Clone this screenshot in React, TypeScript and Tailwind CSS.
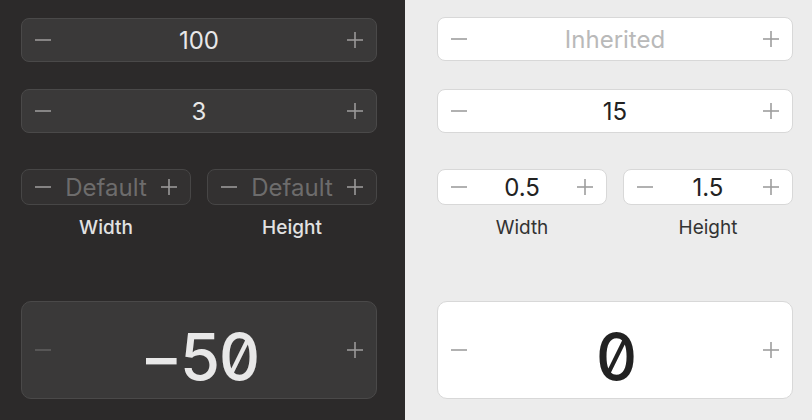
import type { ReactNode } from "react";

type Theme = "dark" | "light";

const MinusIcon = ({ className }: { className: string }) => (
  <svg width="16" height="16" viewBox="0 0 16 16" className={className}>
    <line x1="0" y1="8" x2="16" y2="8" stroke="currentColor" strokeWidth="1.6" />
  </svg>
);

const PlusIcon = ({ className }: { className: string }) => (
  <svg width="16" height="16" viewBox="0 0 16 16" className={className}>
    <line x1="0" y1="8" x2="16" y2="8" stroke="currentColor" strokeWidth="1.6" />
    <line x1="8" y1="0" x2="8" y2="16" stroke="currentColor" strokeWidth="1.6" />
  </svg>
);

function Stepper({
  theme,
  children,
  size = "md",
  muted = false,
  minusDisabled = false,
}: {
  theme: Theme;
  children: ReactNode;
  size?: "sm" | "md" | "lg";
  muted?: boolean;
  minusDisabled?: boolean;
}) {
  const dark = theme === "dark";
  const box = dark
    ? size === "sm"
      ? "bg-[#333131] border-[#474646]"
      : "bg-[#3a3939] border-[#4a4949]"
    : "bg-white border-[#d8d8d8]";
  const height =
    size === "lg" ? "h-[98px] rounded-[10px]" : size === "sm" ? "h-[36px] rounded-[8px]" : "h-[44px] rounded-[8px]";
  const iconColor = dark ? "text-[#9a9999]" : "text-[#9e9e9e]";
  const minusColor = minusDisabled ? "text-[#5f5e5e]" : iconColor;
  const textColor = muted
    ? dark
      ? "text-[#6d6c6c]"
      : "text-[#b9b9b9]"
    : dark
      ? "text-[#e8e8e8]"
      : "text-[#222222]";
  const textSize =
    size === "lg"
      ? "text-[65px] font-medium leading-none pt-[12px] tabular-nums slashed-zero tracking-[-3px]"
      : "text-[24px] leading-none pt-[2px]";

  return (
    <div className={`flex items-center border px-[13px] ${box} ${height}`}>
      <MinusIcon className={`shrink-0 ${minusColor}`} />
      <div className={`flex-1 text-center ${textColor} ${textSize}`}>{children}</div>
      <PlusIcon className={`shrink-0 ${iconColor}`} />
    </div>
  );
}

function Panel({ theme, values }: { theme: Theme; values: { a: string; b: string; w: string; h: string; big: string } }) {
  const dark = theme === "dark";
  const labelColor = dark ? "text-[#e2e2e2] font-medium" : "text-[#333333]";
  const mutedSmall = values.w === "Default";
  return (
    <div
      className={`flex flex-col ${
        dark ? "w-[405px] bg-[#2c2a2a] pl-[21px] pr-[28px] pt-[18px]" : "w-[407px] bg-[#ececec] pl-[32px] pr-[19px] pt-[17px]"
      }`}
    >
      <Stepper theme={theme} muted={values.a === "Inherited"}>
        {values.a}
      </Stepper>
      <div className={dark ? "mt-[27px]" : "mt-[28px]"}>
        <Stepper theme={theme}>{values.b}</Stepper>
      </div>
      <div className="mt-[36px] flex gap-[16px]">
        {[
          { v: values.w, label: "Width" },
          { v: values.h, label: "Height" },
        ].map((item) => (
          <div key={item.label} className="flex w-[170px] flex-col items-stretch">
            <Stepper theme={theme} size="sm" muted={mutedSmall}>
              {item.v}
            </Stepper>
            <div className={`mt-[12px] text-center text-[19px] leading-[22px] ${labelColor}`}>{item.label}</div>
          </div>
        ))}
      </div>
      <div className="mt-[62px]">
        <Stepper theme={theme} size="lg" minusDisabled={dark}>
          {values.big}
        </Stepper>
      </div>
    </div>
  );
}

export default function App() {
  return (
    <div className="flex h-[420px] w-[812px] overflow-hidden font-['Inter',sans-serif]">
      <Panel theme="dark" values={{ a: "100", b: "3", w: "Default", h: "Default", big: "\u221250" }} />
      <Panel theme="light" values={{ a: "Inherited", b: "15", w: "0.5", h: "1.5", big: "0" }} />
    </div>
  );
}
